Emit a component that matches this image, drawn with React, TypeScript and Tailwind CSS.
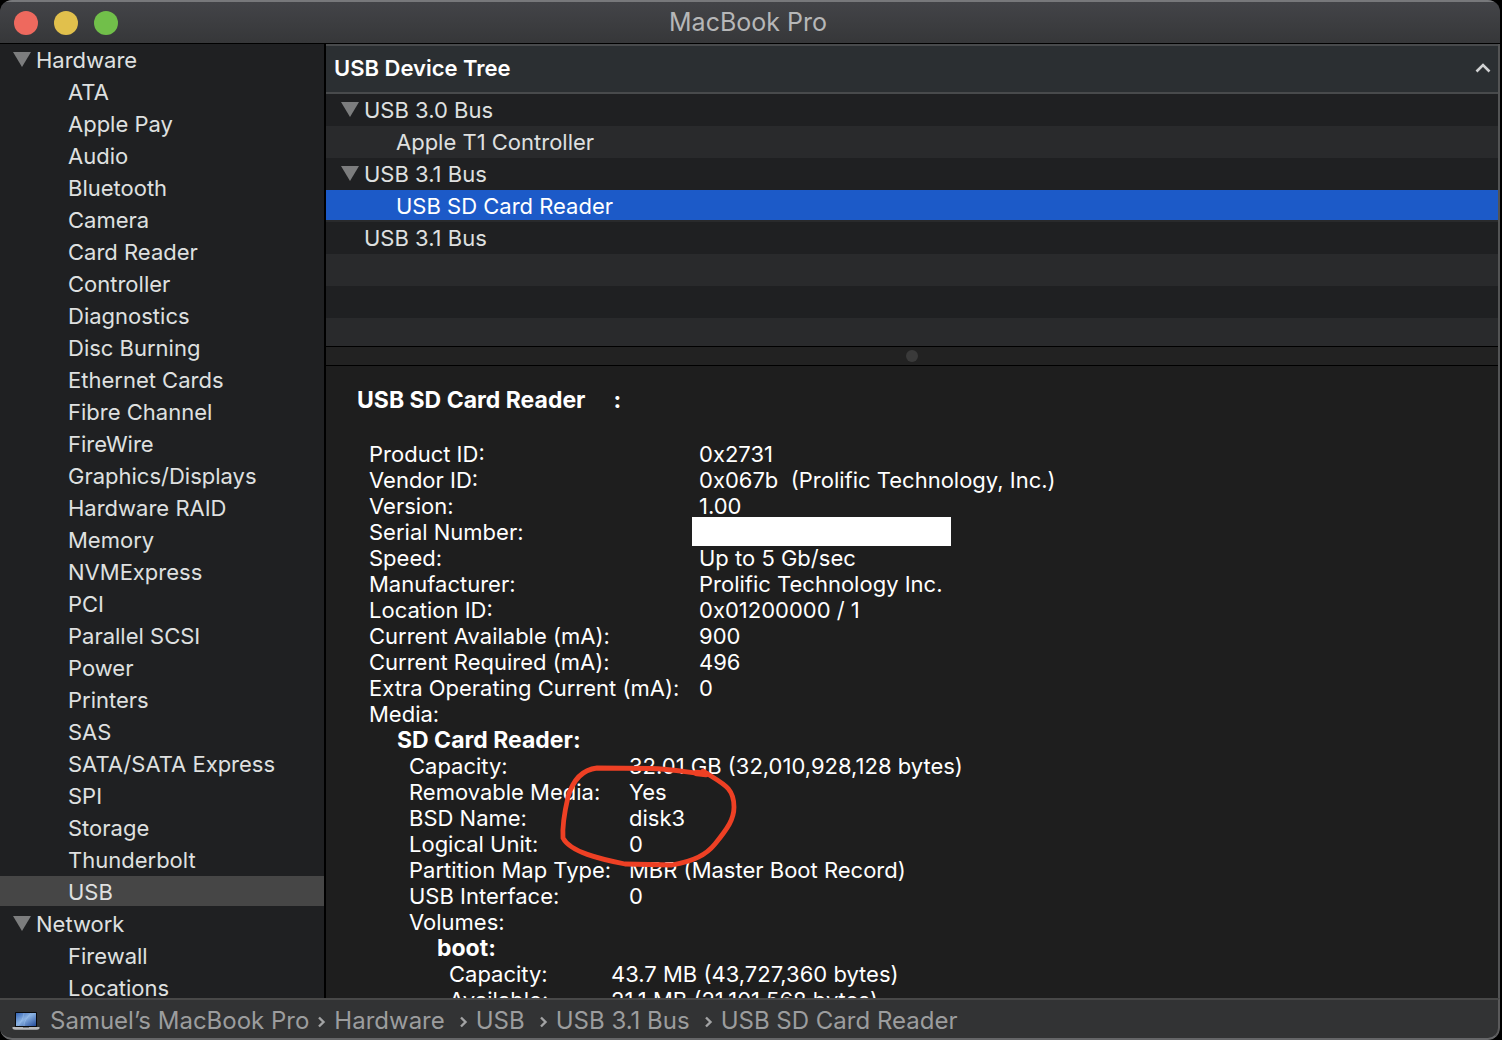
import type { ReactNode } from "react";

const hardware = [
  "ATA", "Apple Pay", "Audio", "Bluetooth", "Camera", "Card Reader", "Controller", "Diagnostics",
  "Disc Burning", "Ethernet Cards", "Fibre Channel", "FireWire", "Graphics/Displays", "Hardware RAID",
  "Memory", "NVMExpress", "PCI", "Parallel SCSI", "Power", "Printers", "SAS", "SATA/SATA Express",
  "SPI", "Storage", "Thunderbolt", "USB",
];
const network = ["Firewall", "Locations"];

const device: [string, ReactNode][] = [
  ["Product ID:", "0x2731"],
  ["Vendor ID:", "0x067b  (Prolific Technology, Inc.)"],
  ["Version:", "1.00"],
  ["Serial Number:", <span className="absolute -top-0.5 -left-[7px] h-[29px] w-[259px] bg-white" />],
  ["Speed:", "Up to 5 Gb/sec"],
  ["Manufacturer:", "Prolific Technology Inc."],
  ["Location ID:", "0x01200000 / 1"],
  ["Current Available (mA):", "900"],
  ["Current Required (mA):", "496"],
  ["Extra Operating Current (mA):", "0"],
  ["Media:", ""],
];
const media: [string, ReactNode][] = [
  ["Capacity:", "32.01 GB (32,010,928,128 bytes)"],
  ["Removable Media:", "Yes"],
  ["BSD Name:", "disk3"],
  ["Logical Unit:", "0"],
  ["Partition Map Type:", "MBR (Master Boot Record)"],
  ["USB Interface:", "0"],
  ["Volumes:", ""],
];
const boot: [string, ReactNode][] = [
  ["Capacity:", "43.7 MB (43,727,360 bytes)"],
  ["Available:", "21.1 MB (21,101,568 bytes)"],
];

function Triangle() {
  return (
    <svg className="h-4 w-[18px] shrink-0" viewBox="0 0 18 16" aria-hidden="true">
      <path d="M0 0h18L9 15z" fill="#7c7d7e" />
    </svg>
  );
}

function SidebarItem({ label, selected }: { label: string; selected?: boolean }) {
  return (
    <li className="h-8">
      <button
        className={
          selected
            ? "block h-[30px] w-full bg-[#464646] pl-[68px] text-left leading-8"
            : "block h-8 w-full pl-[68px] text-left leading-8"
        }
        aria-current={selected ? "page" : undefined}
      >
        {label}
      </button>
    </li>
  );
}

function SidebarGroup({ label, items }: { label: string; items: string[] }) {
  return (
    <li>
      <button className="flex h-8 w-full items-center gap-[5px] pl-[13px] text-left" aria-expanded="true">
        <Triangle />
        {label}
      </button>
      <ul>
        {items.map((item) => (
          <SidebarItem key={item} label={item} selected={item === "USB"} />
        ))}
      </ul>
    </li>
  );
}

function Properties({ rows, labelWidth }: { rows: [string, ReactNode][]; labelWidth: string }) {
  return (
    <table className="border-collapse">
      <tbody>
        {rows.map(([label, value]) => (
          <tr key={label} className="h-[26px]">
            <th scope="row" className={`${labelWidth} p-0 text-left font-normal whitespace-nowrap`}>{label}</th>
            <td className="relative p-0 whitespace-pre">{value}</td>
          </tr>
        ))}
      </tbody>
    </table>
  );
}

function TreeRow({ label, level, selected, open }: { label?: string; level?: number; selected?: boolean; open?: boolean }) {
  return (
    <tr className="h-8 odd:bg-[#1f2022] even:bg-[#292a2c]">
      <td className="p-0 align-top">
        {label && (
          <button
            className={
              selected
                ? "flex h-[30px] w-full items-center bg-[#1c5ac8] pt-0.5 pl-[70px] text-white"
                : level === 2
                  ? "flex h-8 w-full items-center pl-[70px]"
                  : open
                    ? "flex h-8 w-full items-center gap-[5px] pl-[15px]"
                    : "flex h-8 w-full items-center pl-[38px]"
            }
          >
            {open && <Triangle />}
            {label}
          </button>
        )}
      </td>
    </tr>
  );
}

function Laptop() {
  return (
    <svg className="h-5 w-7 shrink-0" viewBox="0 0 28 20" aria-hidden="true">
      <defs>
        <linearGradient id="screen" x1="0" y1="0" x2="1" y2="1">
          <stop offset="0" stopColor="#3464b4" />
          <stop offset=".45" stopColor="#8bb3e3" />
          <stop offset="1" stopColor="#234a98" />
        </linearGradient>
      </defs>
      <rect x="3" y="1" width="22" height="16" rx="1" fill="#08090b" />
      <rect x="4" y="2" width="20" height="13" fill="url(#screen)" />
      <path d="M6 15C8 12 11 9 12 2M12 15c0-5 3-8 7-13" stroke="#a9c9f0" strokeWidth=".7" fill="none" opacity=".6" />
      <path d="M.5 16h27v1.500q-1 1.300-3 1.300h-21q-2 0-3-1.300z" fill="#b9babc" />
      <path d="M11 16h6v1h-6z" fill="#77787a" />
    </svg>
  );
}

function Crumb({ children, first, last }: { children: ReactNode; first?: boolean; last?: boolean }) {
  return (
    <li className="flex items-center">
      <a href="#">{children}</a>
      {!last && (
        <svg
          className={first ? "mt-0.5 mr-2 ml-2 h-3 w-[9px]" : "mt-0.5 mr-2 ml-3.5 h-3 w-[9px]"}
          viewBox="0 0 9 12"
          fill="none"
          stroke="#a2a3a4"
          strokeWidth="2.400"
          aria-hidden="true"
        >
          <path d="M2 1.500 6.500 6 2 10.500" />
        </svg>
      )}
    </li>
  );
}

export default function App() {
  return (
    <div className="h-screen bg-black pr-0.5 font-['Inter',sans-serif] text-[22px] text-[#dfe0e0]">
      <div className="flex h-full flex-col overflow-hidden rounded-xl bg-[#1e1e1e]">
        <header className="grid h-11 shrink-0 grid-cols-[1fr_auto_1fr] items-center border-t-2 border-b border-t-[#77787b] border-b-black bg-linear-to-b from-[#434448] to-[#363739]">
          <div className="flex gap-4 pl-3.5">
            <button aria-label="Close" className="size-6 rounded-full bg-[#ee695e]" />
            <button aria-label="Minimize" className="size-6 rounded-full bg-[#e1c04c]" />
            <button aria-label="Zoom" className="size-6 rounded-full bg-[#71bf4a]" />
          </div>
          <h1 className="pr-1 text-[25px] text-[#b6b7b8]">MacBook Pro</h1>
        </header>

        <div className="flex min-h-0 flex-1">
          <nav aria-label="Categories" className="w-[326px] shrink-0 overflow-hidden border-r-2 border-black bg-[#1f2022]">
            <ul>
              <SidebarGroup label="Hardware" items={hardware} />
              <SidebarGroup label="Network" items={network} />
            </ul>
          </nav>

          <main className="flex min-w-0 flex-1 flex-col border-r-2 border-[#535455]">
            <div className="h-[302px] shrink-0 overflow-hidden">
              <table className="w-full border-collapse">
                <thead>
                  <tr>
                    <th className="p-0">
                      <button className="flex h-[50px] w-full items-center justify-between border-y-2 border-[#484a4c] bg-[#2b2f32] pr-1.5 pb-0.5 pl-2 font-semibold text-white">
                        USB Device Tree
                        <svg className="h-3 w-[18px]" viewBox="0 0 18 12" fill="none" stroke="#d0d1d2" strokeWidth="2.600" aria-hidden="true">
                          <path d="M2.500 9.500 9 3l6.500 6.500" />
                        </svg>
                      </button>
                    </th>
                  </tr>
                </thead>
                <tbody>
                  <TreeRow label="USB 3.0 Bus" open />
                  <TreeRow label="Apple T1 Controller" level={2} />
                  <TreeRow label="USB 3.1 Bus" open />
                  <TreeRow label="USB SD Card Reader" level={2} selected />
                  <TreeRow label="USB 3.1 Bus" />
                  <TreeRow />
                  <TreeRow />
                  <TreeRow />
                </tbody>
              </table>
            </div>
            <div role="separator" className="flex h-5 shrink-0 items-center justify-center border-y border-black bg-[#222222]">
              <span className="size-3 rounded-full bg-[#3a3a3a]" />
            </div>

            <section className="min-h-0 flex-1 overflow-hidden pt-[21px] pl-[31px] leading-[26px] text-white">
              <h2 className="mb-7 flex gap-7 text-[23px] font-bold">
                USB SD Card Reader <span>:</span>
              </h2>
              <div className="pl-3">
                <Properties rows={device} labelWidth="w-[330px] min-w-[330px]" />
                <div className="relative pl-7">
                  <h3 className="text-[23px] font-bold">SD Card Reader:</h3>
                  <div className="pl-3">
                    <Properties rows={media} labelWidth="w-[220px] min-w-[220px]" />
                    <div className="pl-7">
                      <h4 className="text-[23px] font-bold">boot:</h4>
                      <div className="pl-3">
                        <Properties rows={boot} labelWidth="w-[162px] min-w-[162px]" />
                      </div>
                    </div>
                  </div>
                  <svg className="absolute top-[33px] left-[187px] h-[110px] w-[184px]" viewBox="556 760 184 110" fill="none" stroke="#ee4024" strokeWidth="4.800" strokeLinecap="round" strokeLinejoin="round" aria-hidden="true">
                    <path d="M705 774C690 773 674 769 650 768.500C625 768 610 768 597 768C580 770 572 783 568 797C565 810 562 824 563 838C570 852 600 859 625 864L672 865C694 861 706 855 715 844C728 828 734 819 734 807C734 787 723 784 703 771" />
                    <path d="m697 773 9 1" strokeWidth="6.500" />
                  </svg>
                </div>
              </div>
            </section>
          </main>
        </div>

        <footer className="flex h-[42px] shrink-0 items-center rounded-b-xl border-y-2 border-r-2 border-t-[#484848] border-r-[#5a5a5b] border-b-[#656668] bg-[#323334] pt-1 pl-3 text-[24px] text-[#9c9d9e]">
          <nav aria-label="Path" className="flex items-center gap-2.5">
            <Laptop />
            <ol className="flex">
              <Crumb first>Samuel’s MacBook Pro</Crumb>
              <Crumb>Hardware</Crumb>
              <Crumb>USB</Crumb>
              <Crumb>USB 3.1 Bus</Crumb>
              <Crumb last>USB SD Card Reader</Crumb>
            </ol>
          </nav>
        </footer>
      </div>
    </div>
  );
}
